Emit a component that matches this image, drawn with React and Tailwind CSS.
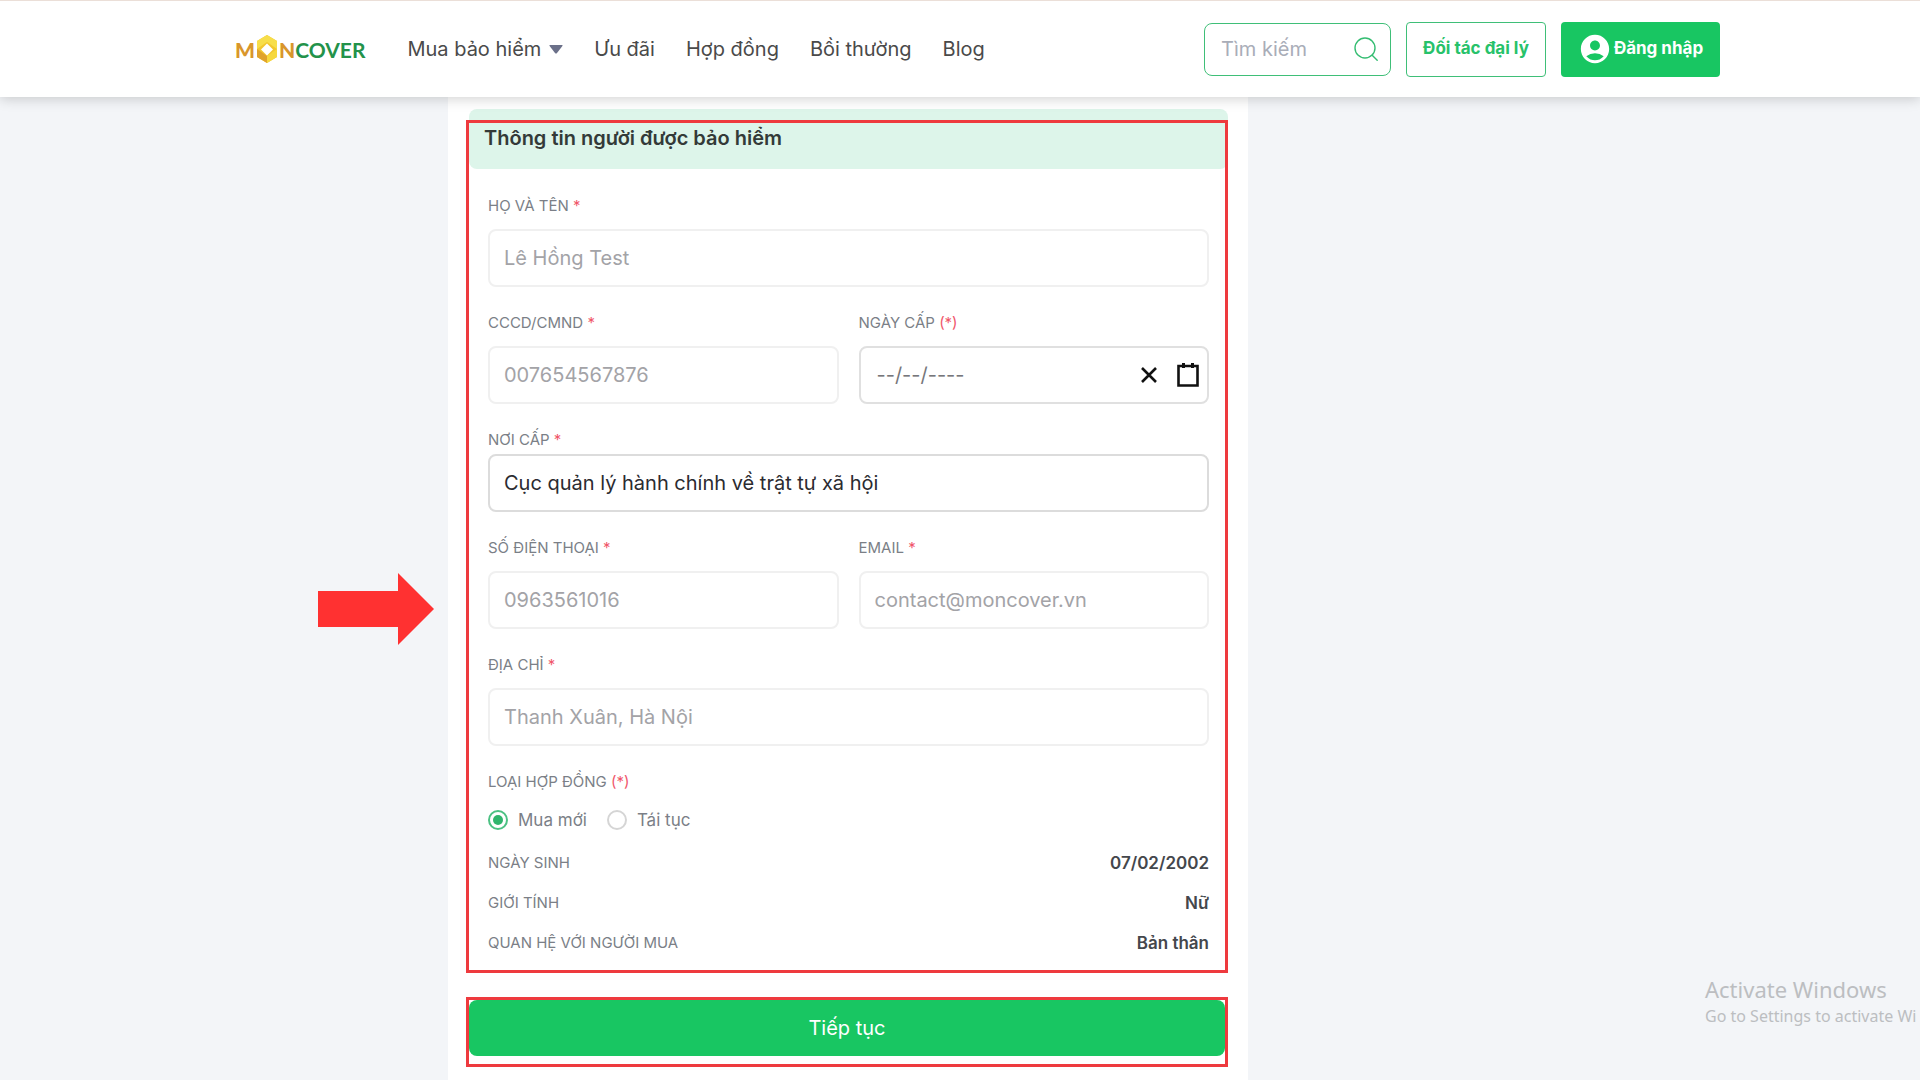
import React, { useState } from 'react';
import { MdAccountCircle } from 'react-icons/md';

const navLinks = ['Ưu đãi', 'Hợp đồng', 'Bồi thường', 'Blog'];

const summary = [
    { label: 'NGÀY SINH', value: '07/02/2002' },
    { label: 'GIỚI TÍNH', value: 'Nữ' },
    { label: 'QUAN HỆ VỚI NGƯỜI MUA', value: 'Bản thân' },
];

const Logo = () => (
    <a href="#" aria-label="Moncover" className="flex items-center font-['Lato'] text-[21px] leading-none">
        <span className="font-black text-[#d9962b]">M</span>
        <svg viewBox="0 0 22 28" className="w-[22px] h-7 mx-px">
            <path d="M11 0 21 6v16l-10 6L1 22V6Z" fill="#f2c72e" />
            <path d="M11 0 1 6v8l10-7 10 7V6Z" fill="#f7de4a" />
            <path d="M1 14v8l10 6v-7Z" fill="#e0a32c" />
            <path d="M21 14v8l-10 6v-7Z" fill="#f6d83e" />
            <path d="m11 8.500 6 6-6 6-6-6Z" fill="#fff" />
        </svg>
        <span className="font-black text-[#d9962b]">N</span>
        <span className="font-bold text-[#23924a]">COVER</span>
    </a>
);

const Header = () => (
    <header className="relative z-20 bg-white border-t border-[#ebdfd8] shadow-[0_2px_12px_rgba(0,0,0,0.18)]">
        <div className="flex items-center h-24 pl-[235px] pr-[200px]">
            <Logo />
            <nav className="flex items-center gap-[31px] ml-[42px] text-xl text-[#4a4a4a] whitespace-nowrap">
                <button type="button" className="flex items-center gap-2">
                    Mua bảo hiểm
                    <svg viewBox="0 0 14 9" className="w-[14px] h-[9px]">
                        <path d="M1 0h12q1 0 .4 1L8 8q-1 1-2 0L.6 1Q0 0 1 0Z" fill="#6b7089" />
                    </svg>
                </button>
                {navLinks.map((link) => (
                    <a key={link} href="#">{link}</a>
                ))}
            </nav>
            <div className="flex items-center gap-[15px] ml-auto">
                <form role="search" className="flex items-center w-[187px] h-[53px] px-4 border border-[#3fbf78] rounded-lg">
                    <input
                        type="text"
                        aria-label="Tìm kiếm"
                        placeholder="Tìm kiếm"
                        className="w-full min-w-0 text-xl outline-none placeholder:text-[#a9adb8]"
                    />
                    <button type="submit" aria-label="Tìm" className="-mr-1">
                        <svg viewBox="0 0 24 24" className="w-6 h-6" fill="none" stroke="#35bd72" strokeWidth="1.400" strokeLinecap="round">
                            <circle cx="11" cy="11" r="10" />
                            <path d="m18.200 18.200 5 5" />
                        </svg>
                    </button>
                </form>
                <a href="#" className="flex items-center justify-center w-[140px] h-[55px] border border-[#3fbf78] rounded text-[17px] font-bold text-[#27c26a] whitespace-nowrap">
                    Đối tác đại lý
                </a>
                <button type="button" className="flex items-center justify-center gap-0.5 w-[159px] h-[55px] bg-[#18c662] rounded text-[17px] font-bold text-white whitespace-nowrap">
                    <MdAccountCircle className="w-[34px] h-[34px]" />
                    Đăng nhập
                </button>
            </div>
        </div>
    </header>
);

const Label = ({ htmlFor, mark = '*', children }) => (
    <label htmlFor={htmlFor} className="block text-[15px] leading-5 text-[#7b7f87]">
        {children} <span className="text-[#f0566a]">{mark}</span>
    </label>
);

const Field = ({ id, label, type = 'text', value }) => (
    <div>
        <Label htmlFor={id}>{label}</Label>
        <input
            id={id}
            type={type}
            defaultValue={value}
            disabled
            className="w-full h-[58px] mt-[13px] px-3.5 border-2 border-[#f0f0f0] rounded-lg text-xl text-[#a3a3a7]"
        />
    </div>
);

const DateField = () => {
    const [date, setDate] = useState('');

    return (
        <div>
            <Label htmlFor="issueDate" mark="(*)">NGÀY CẤP</Label>
            <div className="flex items-center h-[58px] mt-[13px] pl-4 pr-2 border-2 border-[#e0e0e0] rounded-lg">
                <input
                    id="issueDate"
                    type="text"
                    value={date}
                    onChange={(e) => setDate(e.target.value)}
                    placeholder="--/--/----"
                    className="w-full min-w-0 text-xl outline-none placeholder:text-[#77777b]"
                />
                <button type="button" aria-label="Xóa ngày" onClick={() => setDate('')} className="mr-5">
                    <svg viewBox="0 0 16 16" className="w-4 h-4" stroke="#111" strokeWidth="2.600">
                        <path d="m1 1 14 14M15 1 1 15" />
                    </svg>
                </button>
                <button type="button" aria-label="Chọn ngày">
                    <svg viewBox="0 0 22 24" className="w-[22px] h-6" fill="none" stroke="#111">
                        <path d="M1.500 3h19v19.500h-19Z" strokeWidth="2.600" />
                        <path d="M6.500 0v5M15.500 0v5" strokeWidth="3" />
                    </svg>
                </button>
            </div>
        </div>
    );
};

const ContractType = () => {
    const [type, setType] = useState('new');
    const options = [
        { id: 'new', label: 'Mua mới' },
        { id: 'renew', label: 'Tái tục' },
    ];

    return (
        <fieldset>
            <legend className="text-[15px] leading-5 text-[#7b7f87]">
                LOẠI HỢP ĐỒNG <span className="text-[#f0566a]">(*)</span>
            </legend>
            <div className="flex gap-5 mt-4">
                {options.map((o) => (
                    <label key={o.id} htmlFor={o.id} className="flex items-center gap-2.5 text-[17px] leading-6 text-[#7b7f87]">
                        <input
                            id={o.id}
                            type="radio"
                            name="contractType"
                            checked={type === o.id}
                            onChange={() => setType(o.id)}
                            className="appearance-none w-5 h-5 rounded-full border-2 border-[#d5d5d5] bg-white bg-clip-content p-[3px] checked:border-[#4cc183] checked:bg-[#2fb56c]"
                        />
                        {o.label}
                    </label>
                ))}
            </div>
        </fieldset>
    );
};

const App = () => (
    <div className="flex flex-col min-h-screen bg-[#f3f5f8] font-['Inter',sans-serif] overflow-hidden">
        <Header />

        <main className="relative flex grow pl-[448px]">
            <form className="w-full max-w-[800px] pt-3 pb-3 pl-[18px] pr-5 bg-white" onSubmit={(e) => e.preventDefault()}>
                <section className="relative pl-[3px]">
                    <h2 className="h-[60px] px-[15px] pt-[15px] bg-[#ddf5ea] rounded-lg text-xl leading-7 font-semibold text-[#333a38]">
                        Thông tin người được bảo hiểm
                    </h2>
                    <div className="flex flex-col gap-[26px] pt-[27px] px-[19px] pb-5">
                        <Field id="fullName" label="HỌ VÀ TÊN" value="Lê Hồng Test" />
                        <div className="grid grid-cols-2 gap-5">
                            <Field id="idNumber" label="CCCD/CMND" value="007654567876" />
                            <DateField />
                        </div>
                        <div>
                            <Label htmlFor="issuePlace">NƠI CẤP</Label>
                            <input
                                id="issuePlace"
                                type="text"
                                defaultValue="Cục quản lý hành chính về trật tự xã hội"
                                className="w-full h-[58px] mt-1 px-3.5 border-2 border-[#dcdcdc] rounded-lg text-xl text-[#2b2b30]"
                            />
                        </div>
                        <div className="grid grid-cols-2 gap-5">
                            <Field id="phone" label="SỐ ĐIỆN THOẠI" type="tel" value="0963561016" />
                            <Field id="email" label="EMAIL" type="email" value="contact@moncover.vn" />
                        </div>
                        <Field id="address" label="ĐỊA CHỈ" value="Thanh Xuân, Hà Nội" />
                        <div>
                            <ContractType />
                            <dl className="flex flex-col gap-5 mt-[21px]">
                                {summary.map((row) => (
                                    <div key={row.label} className="flex justify-between leading-5">
                                        <dt className="text-[15px] text-[#7b7f87]">{row.label}</dt>
                                        <dd className="text-[17px] font-semibold text-[#44474c]">{row.value}</dd>
                                    </div>
                                ))}
                            </dl>
                        </div>
                    </div>
                    <div className="absolute inset-x-0 top-[11px] bottom-0 border-3 border-[#ee3a3e] pointer-events-none" />
                </section>

                <div className="mt-6 pb-2 border-3 border-[#ee3a3e]">
                    <button type="submit" className="block w-full h-14 bg-[#18c662] rounded-lg text-xl text-white">
                        Tiếp tục
                    </button>
                </div>
            </form>

            {/* pointer next to the form */}
            <svg viewBox="0 0 116 72" className="absolute left-[318px] top-[476px] w-[116px] h-[72px]">
                <path d="M0 18h80V0l36 36-36 36V54H0Z" fill="#ff3131" />
            </svg>

            <div className="absolute left-[1705px] bottom-[52px] font-['Noto_Sans',sans-serif] text-[#bcbec1] whitespace-nowrap">
                <p className="text-[22px] leading-[30px]">Activate Windows</p>
                <p className="text-base leading-6">Go to Settings to activate Wi</p>
            </div>
        </main>
    </div>
);

export default App;
